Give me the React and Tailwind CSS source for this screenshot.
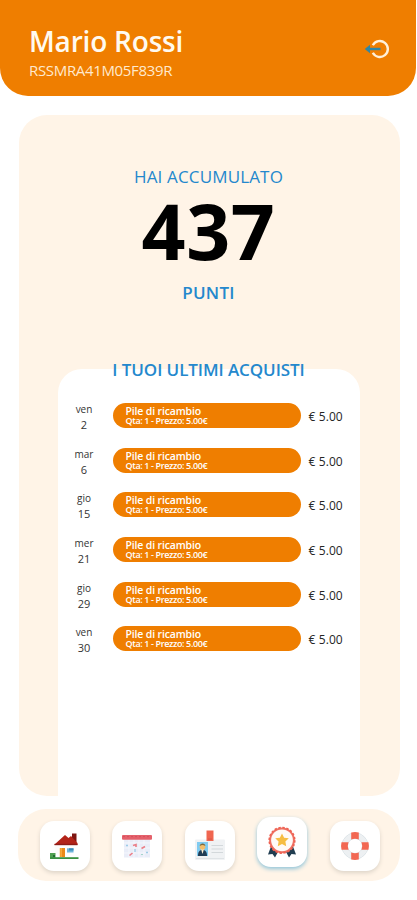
const purchases = [
  ['ven', '2'],
  ['mar', '6'],
  ['gio', '15'],
  ['mer', '21'],
  ['gio', '29'],
  ['ven', '30'],
];

function LogoutIcon() {
  return (
    <svg className="h-[22px] w-[28px]" viewBox="0 0 28 22" fill="none">
      <path d="M9.8 7.2A8 8 0 1 1 9.8 14.8" stroke="#fff0d8" strokeWidth="2.4" />
      <path d="M5 11H17.5" stroke="#2f86a5" strokeWidth="2.4" />
      <path d="M1.8 11L7 6.8V15.2Z" fill="#2f86a5" />
    </svg>
  );
}

function HouseIcon() {
  return (
    <svg className="h-[32px] w-[32px]" viewBox="0 0 32 32">
      <path d="M6 16H25V24.5H6Z" fill="#fdfdfb" />
      <path d="M23 3.5H27.5V12H23Z" fill="#7d1511" />
      <path d="M5.5 14.5L16 5L19.5 8L22 6L28.5 13V15H5.5Z" fill="#b32419" />
      <path d="M5.5 13.8H28.5V15.2H5.5Z" fill="#8e1c16" />
      <path d="M10.8 18H16V27H10.8Z" fill="#eb8a18" />
      <path d="M11.3 18H13V27H11.3Z" fill="#f7a93b" />
      <path d="M18 18.3H24.5V22.5H18Z" fill="#6eb5dc" />
      <path d="M20 18.3H24.5V20.5H20Z" fill="#3d8db9" />
      <path d="M1 23H6.5V28H1Z" fill="#50a052" />
      <path d="M1 27.2H29.5V29H1Z" fill="#3a9141" />
      <path d="M4 25H6V27H4Z" fill="#236d31" />
    </svg>
  );
}

function CalendarIcon() {
  return (
    <svg className="h-[32px] w-[32px]" viewBox="0 0 32 32">
      <path d="M3 9H29V27.5H3Z" fill="#e9edf8" />
      <path d="M3 13H29M3 18H29M3 23H29M8 9V27M13 9V27M18 9V27M23 9V27" stroke="#f8f9fd" strokeWidth="0.8" />
      <rect x="1" y="5" width="30" height="4.8" rx="1" fill="#e4616b" />
      <path d="M2 6.6H30" stroke="#cf4d59" strokeWidth="0.8" strokeDasharray="2 2" />
      <path d="M12 15.5L15 14.5V17M20.5 18.5L24 16.5M8.5 25.5L11.5 23" stroke="#ea7e88" strokeWidth="1.6" fill="none" />
      <path d="M5 15.5H7M14 19V22M25 22.5H27" stroke="#9ccbe6" strokeWidth="1.3" />
      <path d="M20 24.5H22" stroke="#a5d5cb" strokeWidth="1.2" />
    </svg>
  );
}

function BadgeIcon() {
  return (
    <svg className="h-[34px] w-[32px]" viewBox="0 0 32 34">
      <rect x="1" y="10.5" width="30" height="20.5" rx="1" fill="#f0f2f4" />
      <path d="M2 29.5H30" stroke="#dfe3e6" />
      <path d="M12.5 1.5H19.5V12H12.5Z" fill="#f06650" />
      <path d="M14 9.5H18V10.7H14Z" fill="#d9574a" />
      <path d="M3 13H14V27H3Z" fill="#7fcbf1" />
      <path d="M4 27C4 22 6 21 8.5 21S13 22 13 27Z" fill="#203d56" />
      <path d="M7 20H10L8.5 25Z" fill="#fff2d5" />
      <circle cx="8.5" cy="17.8" r="2.9" fill="#f2be6c" />
      <path d="M5.8 17C5.5 13.5 11.7 13.5 11.3 17Q8.5 15 5.8 17Z" fill="#7d6b3f" />
      <path d="M17.5 16.5H29M17.5 20H29M17.5 23.5H29" stroke="#d3d8db" strokeWidth="1" />
    </svg>
  );
}

function AwardIcon() {
  return (
    <svg className="h-[34px] w-[32px]" viewBox="0 0 32 34">
      <path d="M5 21.5L2 29.5L6.5 29L9 32.5L13 25ZM27 21.5L30 29.5L25.5 29L23 32.5L19 25Z" fill="#203d50" />
      <circle cx="16" cy="15.3" r="11.9" fill="#fffaf7" stroke="#ef7062" strokeWidth="2" />
      <circle cx="16" cy="15.3" r="12.8" fill="none" stroke="#ee6253" strokeWidth="1.6" strokeDasharray="2.4 1.62" />
      <path d="M16 8.4L18.1 12.7L22.8 13.3L19.4 16.6L20.2 21.3L16 19L11.8 21.3L12.6 16.6L9.2 13.3L13.9 12.7Z" fill="#f6bd43" />
    </svg>
  );
}

function LifebuoyIcon() {
  return (
    <svg className="h-[30px] w-[30px]" viewBox="0 0 30 30">
      <circle cx="15" cy="15" r="13" fill="none" stroke="#d3dde2" strokeWidth="1" />
      <circle cx="15" cy="15" r="10.2" fill="none" stroke="#edf0f2" strokeWidth="5" />
      <circle cx="15" cy="15" r="7.5" fill="none" stroke="#d3dadf" strokeWidth="0.8" />
      <path d="M11.2 1.5Q15 .6 18.8 1.5V8.5Q15 7 11.2 8.5ZM11.2 28.5Q15 29.4 18.8 28.5V21.5Q15 23 11.2 21.5ZM1.5 11.2Q.6 15 1.5 18.8H8.5Q7 15 8.5 11.2ZM28.5 11.2Q29.4 15 28.5 18.8H21.5Q23 15 21.5 11.2Z" fill="#f26853" />
    </svg>
  );
}

function NavTile({ active = false, label, children }) {
  return (
    <button
      aria-label={label}
      className={
        active
          ? 'mb-[7px] flex size-[50px] items-center justify-center rounded-[14px] bg-white shadow-[0_2px_4px_#8fc4da]'
          : 'flex size-[50px] items-center justify-center rounded-[14px] bg-white shadow-[0_2px_4px_#ddd4c8]'
      }
    >
      {children}
    </button>
  );
}

export default function App() {
  return (
    <div className="h-[900px] w-[417px] overflow-hidden bg-white font-['Open_Sans','Noto_Sans',sans-serif] whitespace-nowrap">
      <header className="flex h-[96px] w-[416px] items-start justify-between rounded-b-[28px] bg-[#ef7e00] pt-[24px] pr-[25px] pl-[29px] text-[#fffaf0]">
        <div>
          <h1 className="h-[34px] text-[28px] leading-[34px] font-semibold tracking-[-0.2px]">Mario Rossi</h1>
          <p className="h-[24px] text-[15px] leading-[24px] tracking-[-0.33px] text-[#ffe9cd]">RSSMRA41M05F839R</p>
        </div>
        <button aria-label="Esci" className="mt-[14px]"><LogoutIcon /></button>
      </header>

      <main className="mt-[19px] ml-[19px] flex h-[681px] w-[381px] flex-col items-center overflow-hidden rounded-[28px] bg-[#fff4e7] pt-[50px] pr-[2px]">
        <p className="h-6 text-[17px] leading-6 tracking-[0.15px] text-[#2488cd]">HAI ACCUMULATO</p>
        <p className="mt-[3px] h-[78px] text-[77px] leading-[78px] font-bold tracking-[0.6px] text-black">437</p>
        <p className="mt-[11px] h-6 text-[17px] leading-6 font-semibold tracking-[0.3px] text-[#2488cd]">PUNTI</p>
        <h2 className="relative z-10 mt-[52px] h-6 text-[17px] leading-[25px] font-semibold tracking-[-0.08px] text-[#2488cd]">I TUOI ULTIMI ACQUISTI</h2>
        <section className="-mt-3 flex w-[302px] grow flex-col gap-[19.7px] rounded-t-[24px] bg-white pt-[34px]">
          {purchases.map(([day, date]) => (
            <div key={date} className="flex h-[25px] shrink-0 items-start">
              <div className="flex w-[52px] flex-col items-center pl-px text-[#333]">
                <span className="h-[15px] text-[10px] leading-[12px]">{day}</span>
                <span className="text-[11px] leading-[13px]">{date}</span>
              </div>
              <div className="ml-[3px] h-[25px] w-[188px] rounded-full bg-[#ef7e00] pt-[3px] pl-[13px] text-white">
                <p className="h-[9px] text-[10.5px] leading-[10px] font-semibold tracking-[-0.15px]">Pile di ricambio</p>
                <p className="text-[9px] leading-[11px] font-semibold tracking-[-0.37px]">Qta: 1 - Prezzo: 5.00€</p>
              </div>
              <span className="ml-[8px] text-[12px] leading-[28px] tracking-[0.1px] text-[#262626]">€ 5.00</span>
            </div>
          ))}
        </section>
      </main>

      <nav className="mt-[13px] ml-[18px] flex h-[72px] w-[382px] items-center justify-between rounded-[28px] bg-[#fff4e7] pt-px pr-[20.5px] pl-[22px]">
        <NavTile label="Home"><HouseIcon /></NavTile>
        <NavTile label="Calendario"><CalendarIcon /></NavTile>
        <NavTile label="Tessera"><BadgeIcon /></NavTile>
        <NavTile label="Premi" active><AwardIcon /></NavTile>
        <NavTile label="Assistenza"><LifebuoyIcon /></NavTile>
      </nav>
    </div>
  );
}
